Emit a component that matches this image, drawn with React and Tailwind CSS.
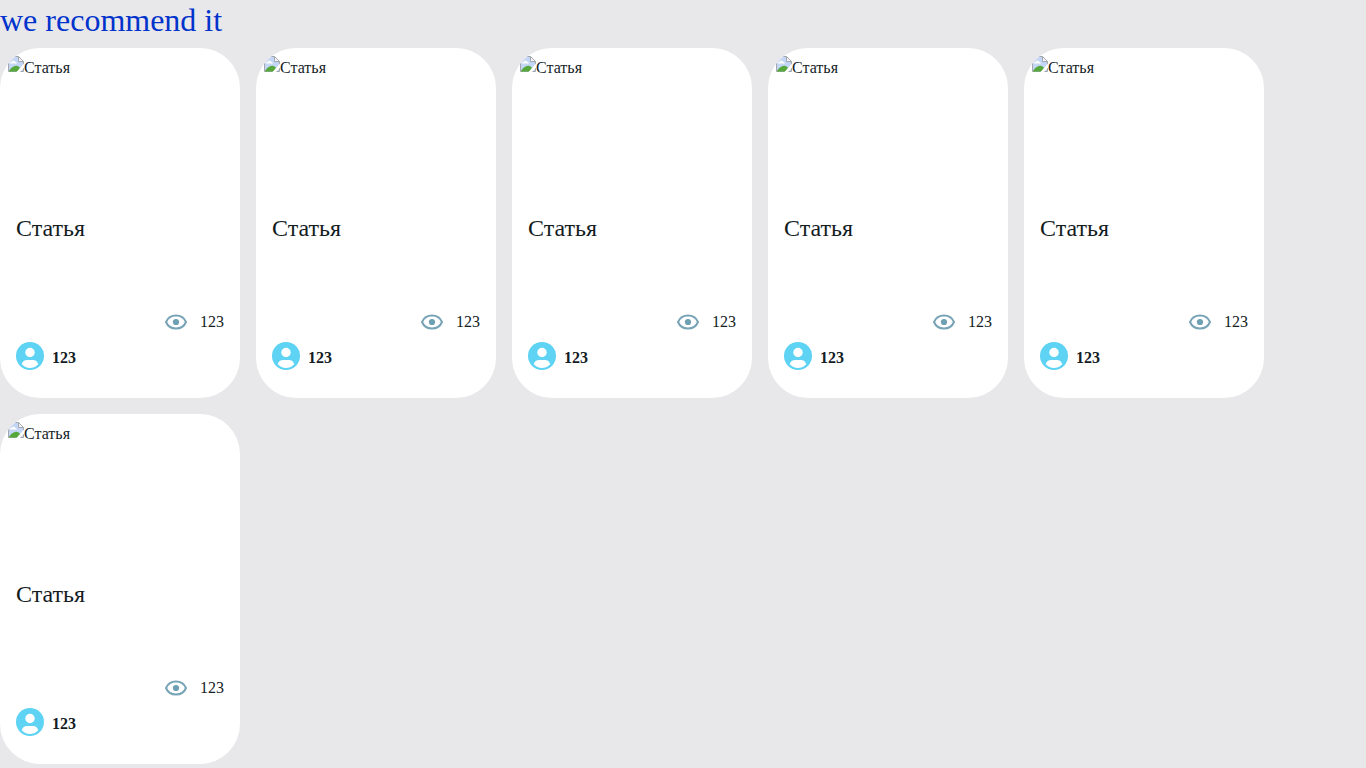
const articles = [1, 2, 3, 4, 5, 6];

function MissingImageIcon() {
  return (
    <svg className="block size-4 shrink-0" viewBox="0 0 16 16">
      <path d="M0.5 0.5H10.5L15.5 5.5V15.5H0.5Z" fill="#c3d6f5" stroke="#a3a6aa" />
      <path d="M2 7.500c0-1 .8-1.700 1.700-1.700C4.200 4.300 6.800 4.300 7.300 5.900c1 0 1.500.7 1.500 1.600Z" fill="#fff" />
      <path d="M1 15.500V15C3 12 5.500 9.800 8 9.800c2 0 3.500 1.200 4.500 2.700L10 15.500Z" fill="#55a83a" />
      <path d="M10.500 .5V5.500H15.500Z" fill="#f4f6f9" stroke="#a3a6aa" />
      <path d="M8.500 16 16 7.500V11.500L12 16Z" fill="#fff" />
    </svg>
  );
}

function EyeIcon() {
  return (
    <svg className="block size-6" viewBox="0 0 24 24" fill="none">
      <path
        d="M2 12C3.800 7.800 7.500 5.500 12 5.500S20.200 7.800 22 12C20.200 16.200 16.500 18.500 12 18.500S3.800 16.200 2 12Z"
        stroke="#77a4b7"
        strokeWidth="2"
        strokeLinejoin="round"
      />
      <circle cx="12" cy="12" r="3.100" fill="#6f9fb3" />
    </svg>
  );
}

function AvatarIcon() {
  return (
    <svg className="block size-7" viewBox="0 0 28 28">
      <circle cx="14" cy="14" r="14" fill="#5ed3f3" />
      <circle cx="14" cy="10.500" r="4.700" fill="#fff" />
      <path d="M5.700 22.200C6.500 19.500 8.500 18 11 18h6c2.500 0 4.500 1.500 5.300 4.200C20.200 24.600 17.300 26 14 26s-6.200-1.400-8.300-3.800Z" fill="#fff" />
    </svg>
  );
}

function ArticleCard() {
  return (
    <article className="flex h-[350px] w-60 flex-col overflow-hidden rounded-[40px] bg-white p-2">
      <div className="flex h-[150px] items-start">
        <MissingImageIcon />
        <span className="mt-px text-base leading-[22px]">Статья</span>
      </div>
      <div className="flex grow flex-col px-2">
        <h2 className="mt-2 h-24 text-2xl leading-7">Статья</h2>
        <div className="flex h-6 items-center justify-end gap-3">
          <EyeIcon />
          <span className="leading-6">123</span>
        </div>
        <div className="mt-2 flex h-7 items-center gap-2">
          <AvatarIcon />
          <span className="mt-[3px] font-bold leading-6">123</span>
        </div>
      </div>
    </article>
  );
}

export default function App() {
  return (
    <main className="h-screen overflow-hidden bg-[#e8e8ea] font-['Liberation_Serif',serif] text-[#141c1f]">
      <h1 className="h-12 text-[32px] leading-10 text-[#0033cc]">we recommend it</h1>
      <div className="flex flex-wrap gap-4">
        {articles.map((id) => (
          <ArticleCard key={id} />
        ))}
      </div>
    </main>
  );
}
